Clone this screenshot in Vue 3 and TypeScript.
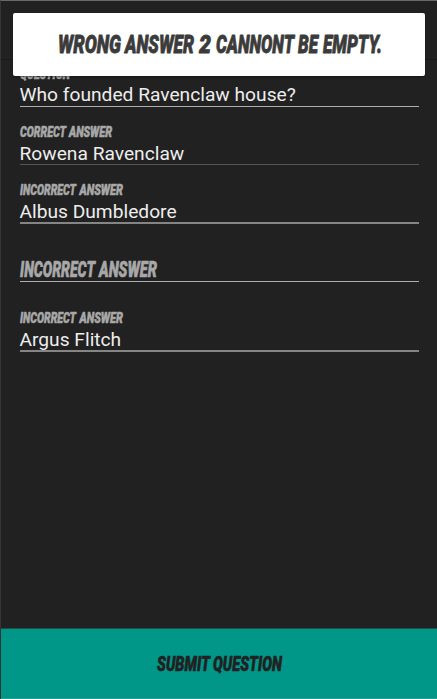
<script setup lang="ts">
interface Word {
  text: string
  x: number
  width: number
}

interface Field {
  id: string
  label: Word[]
  value: string
  tone: string
}

const alertWords: Word[] = [
  { text: 'WRONG', x: 45, width: 63 },
  { text: 'ANSWER', x: 112, width: 69 },
  { text: '2', x: 186, width: 12 },
  { text: 'CANNONT', x: 203, width: 78 },
  { text: 'BE', x: 285, width: 20 },
  { text: 'EMPTY.', x: 310, width: 59 },
]

const incorrect: Word[] = [
  { text: 'INCORRECT', x: 0, width: 56 },
  { text: 'ANSWER', x: 59.5, width: 43.5 },
]

const fields: Field[] = [
  { id: 'question', label: [{ text: 'QUESTION', x: 0, width: 50 }], value: 'Who founded Ravenclaw house?', tone: 'light' },
  {
    id: 'correct',
    label: [
      { text: 'CORRECT', x: 0, width: 46 },
      { text: 'ANSWER', x: 49, width: 43 },
    ],
    value: 'Rowena Ravenclaw',
    tone: 'dim',
  },
  { id: 'wrong1', label: incorrect, value: 'Albus Dumbledore', tone: 'thick' },
  {
    id: 'wrong2',
    label: [
      { text: 'INCORRECT', x: 0, width: 75 },
      { text: 'ANSWER', x: 79, width: 58 },
    ],
    value: '',
    tone: 'light',
  },
  { id: 'wrong3', label: incorrect, value: 'Argus Flitch', tone: 'thick' },
]

const submitWords: Word[] = [
  { text: 'SUBMIT', x: 0, width: 53 },
  { text: 'QUESTION', x: 56, width: 69 },
]
</script>

<template>
  <div class="screen">
    <header class="bar"></header>
    <main class="form">
      <div v-for="f in fields" :key="f.id" class="field" :class="[f.id, f.tone]">
        <svg class="label" :class="{ large: !f.value }" width="200" :height="f.value ? 14 : 20">
          <text
            v-for="w in f.label"
            :key="w.text"
            :x="w.x"
            :y="f.value ? 12.3 : 17"
            :textLength="w.width"
            lengthAdjust="spacingAndGlyphs"
          >{{ w.text }}</text>
        </svg>
        <div v-if="f.value" class="value">{{ f.value }}</div>
      </div>
    </main>
    <button class="submit" type="button">
      <svg width="125" height="24">
        <text
          v-for="w in submitWords"
          :key="w.text"
          :x="w.x"
          y="18.7"
          :textLength="w.width"
          lengthAdjust="spacingAndGlyphs"
        >{{ w.text }}</text>
      </svg>
    </button>
    <div class="alert" role="alert">
      <svg width="412" height="63">
        <text
          v-for="w in alertWords"
          :key="w.text"
          :x="w.x"
          y="40.3"
          :textLength="w.width"
          lengthAdjust="spacingAndGlyphs"
        >{{ w.text }}</text>
      </svg>
    </div>
  </div>
</template>

<style>
body {
  margin: 0;
  background: #212121;
}
</style>

<style scoped>
.screen {
  position: relative;
  box-sizing: border-box;
  width: 437px;
  height: 699px;
  display: flex;
  flex-direction: column;
  border-top: 1px solid #666a69;
  border-left: 1px solid #353535;
  background: #212121;
  overflow: hidden;
}
svg {
  display: block;
  overflow: visible;
}
text {
  font-family: Roboto, sans-serif;
  font-weight: 900;
  font-style: italic;
  stroke-width: 0.6px;
  stroke-linejoin: round;
}
.bar {
  flex: none;
  height: 58px;
  border-bottom: 1px solid #1a1a1a;
}
.form {
  flex: 1;
  padding: 0 18.5px 0 18.5px;
}
.field {
  box-sizing: border-box;
  height: 58px;
  display: flex;
  flex-direction: column;
  justify-content: flex-end;
  border-bottom: 1px solid #adadad;
}
.question {
  height: 47px;
}
.dim {
  border-bottom-color: #555;
}
.thick {
  border-bottom: 2px solid #858585;
  height: 59px;
}
.wrong1 {
  margin-bottom: -1px;
}
.wrong2 {
  height: 59px;
}
.wrong3 {
  height: 70px;
}
.label {
  flex: none;
}
.label text {
  font-size: 15.5px;
  fill: #a8a8a8;
  stroke: #a8a8a8;
}
.label.large {
  margin-bottom: 1px;
}
.label.large text {
  font-size: 21.5px;
}
.value {
  height: 25px;
  line-height: 29px;
  font-family: Roboto, sans-serif;
  font-size: 19.2px;
  white-space: nowrap;
  color: #ededed;
}
.question .value {
  line-height: 27px;
}
.submit {
  flex: none;
  height: 71px;
  padding: 0;
  border: 0;
  border-top: 1px solid #1d514c;
  border-bottom: 1px solid #269e93;
  background: #009688;
  display: flex;
  align-items: center;
  justify-content: center;
}
.submit text {
  font-size: 21px;
  fill: #212121;
  stroke: #212121;
}
.alert {
  position: absolute;
  left: 12px;
  top: 12px;
  width: 412px;
  height: 63px;
  border-radius: 2px;
  background: #fff;
  box-shadow: 0 1px 2px rgba(0, 0, 0, 0.4);
}
.alert text {
  font-size: 26.5px;
  fill: #3b3b3b;
  stroke: #3b3b3b;
  stroke-width: 0.8px;
}
</style>
